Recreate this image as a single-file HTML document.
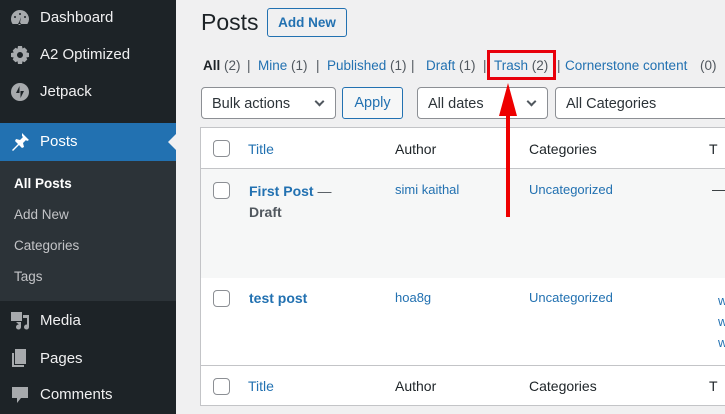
<!DOCTYPE html>
<html><head><meta charset="utf-8"><style>
*{margin:0;padding:0;box-sizing:border-box}
body{width:725px;height:414px;overflow:hidden;background:#f0f0f1;font-family:"Liberation Sans",sans-serif;font-size:14px;color:#1d2327;position:relative}
.a{position:absolute;white-space:nowrap}
#sb{position:absolute;left:0;top:0;width:176px;height:414px;background:#1d2327}
.mi{position:absolute;left:40px;color:#f0f0f1;font-size:15px}
.ic{position:absolute;left:10px;width:20px;height:20px;fill:#a7aaad}
.sub{position:absolute;left:14px;color:#c3c4c7;font-size:13.5px}
.link{color:#2271b1}
.cb{position:absolute;left:213px;width:17px;height:17px;border:1px solid #8c8f94;border-radius:4px;background:#fff}
.sel{position:absolute;height:32px;border:1px solid #8c8f94;border-radius:4px;background:#fff;font-size:14.5px;padding:8px 10px 0;color:#2c3338}
.chev{position:absolute;right:12px;top:10px;width:7px;height:7px;border-right:2px solid #50575e;border-bottom:2px solid #50575e;transform:rotate(45deg)}
.f{position:absolute;top:58px;font-size:13.5px;color:#50575e;white-space:nowrap}
</style></head><body>
<div id="sb">
<svg class="ic" style="top:8px" viewBox="0 0 20 20"><path d="M10 2a9 9 0 0 0-9 9c0 2 .6 3.6 1.6 5h14.8A9 9 0 0 0 10 2zm0 3a1 1 0 1 1 0 2 1 1 0 0 1 0-2zM5 8a1 1 0 1 1 0 2 1 1 0 0 1 0-2zm10 0a1 1 0 1 1 0 2 1 1 0 0 1 0-2zm-4 1-1 5.5a1.3 1.3 0 1 1-1 0z"/></svg>
<div class="mi" style="top:9px">Dashboard</div>
<svg class="ic" style="top:45px" viewBox="0 0 20 20"><path d="M8 1h4l.5 2.5 2-1 2.8 2.8-1 2 2.7.7v4l-2.7.5 1 2-2.8 2.8-2-1L12 19H8l-.5-2.7-2 1-2.8-2.8 1-2L1 12V8l2.7-.5-1-2 2.8-2.8 2 1zM10 7a3 3 0 1 0 0 6 3 3 0 0 0 0-6z"/></svg>
<div class="mi" style="top:46px">A2 Optimized</div>
<svg class="ic" style="top:82px" viewBox="0 0 20 20"><circle cx="10" cy="10" r="9"/><path d="M9.5 4v7H6zM10.5 16V9H14z" fill="#1d2327"/></svg>
<div class="mi" style="top:83px">Jetpack</div>
<div style="position:absolute;top:123px;left:0;width:176px;height:38px;background:#2271b1"></div>
<div style="position:absolute;top:134px;left:168px;border:8px solid transparent;border-right-color:#f0f0f1;border-left:0"></div>
<svg class="ic" style="top:132px;fill:#fff" viewBox="0 0 20 20"><path d="M12 1l7 7-2 1-1-1-3 3 1 4-2 1-3-3-6 6-1-1 6-6-3-3 1-2 4 1 3-3-1-1z"/></svg>
<div class="mi" style="top:133px;color:#fff">Posts</div>
<div style="position:absolute;top:161px;left:0;width:176px;height:140px;background:#2c3338"></div>
<div class="sub" style="top:176px;color:#fff;font-weight:bold">All Posts</div>
<div class="sub" style="top:207px">Add New</div>
<div class="sub" style="top:238px">Categories</div>
<div class="sub" style="top:269px">Tags</div>
<svg class="ic" style="top:310px" viewBox="0 0 20 20"><path d="M1 2h11v9H1zM13 5h6v12a2.5 2.5 0 1 1-2-2.4V8h-4zM6 12h5v5a2.5 2.5 0 1 1-2-2.4z"/></svg>
<div class="mi" style="top:312px">Media</div>
<svg class="ic" style="top:348px" viewBox="0 0 20 20"><path d="M5 1h11v15H5zM2 5h2v12h10v2H2z"/></svg>
<div class="mi" style="top:350px">Pages</div>
<svg class="ic" style="top:385px" viewBox="0 0 20 20"><path d="M2 2h16v11h-7l-4 5v-5H2z"/></svg>
<div class="mi" style="top:386px">Comments</div>
</div>

<div class="a" style="left:201px;top:9px;font-size:23px">Posts</div>
<div class="a" style="left:267px;top:8px;width:80px;height:29px;border:1px solid #2271b1;border-radius:3px;color:#2271b1;font-size:13.5px;font-weight:bold;text-align:center;line-height:27px">Add New</div>

<div class="f" style="left:203px"><b style="color:#1d2327">All</b> (2)</div>
<div class="f" style="left:247px">|</div>
<div class="f" style="left:258px"><span class="link">Mine</span> (1)</div>
<div class="f" style="left:316px">|</div>
<div class="f" style="left:327px"><span class="link">Published</span> (1)</div>
<div class="f" style="left:411px">|</div>
<div class="f" style="left:426px"><span class="link">Draft</span> (1)</div>
<div class="f" style="left:483px">|</div>
<div class="f" style="left:494px"><span class="link">Trash</span> (2)</div>
<div class="f" style="left:557px">|</div>
<div class="f" style="left:565px"><span class="link">Cornerstone content</span></div>
<div class="f" style="left:700px">(0)</div>
<div class="a" style="left:487px;top:50px;width:69px;height:30px;border:3px solid #e8000b"></div>

<div class="sel" style="left:201px;top:87px;width:135px">Bulk actions<span class="chev"></span></div>
<div class="a" style="left:342px;top:87px;width:61px;height:32px;border:1px solid #2271b1;border-radius:3px;background:#f6f7f7;color:#2271b1;font-size:14.5px;text-align:center;line-height:30px">Apply</div>
<div class="sel" style="left:417px;top:87px;width:131px">All dates<span class="chev"></span></div>
<div class="sel" style="left:555px;top:87px;width:200px">All Categories</div>

<div class="a" style="left:200px;top:127px;width:540px;height:279px;border:1px solid #c3c4c7;background:#fff"></div>
<div class="a" style="left:201px;top:168px;width:540px;height:110px;background:#f6f7f7;border-top:1px solid #c3c4c7"></div>
<div class="a" style="left:201px;top:365px;width:540px;height:1px;background:#c3c4c7"></div>

<div class="cb" style="top:140px"></div>
<div class="a link" style="left:248px;top:141px">Title</div>
<div class="a" style="left:395px;top:141px">Author</div>
<div class="a" style="left:529px;top:141px">Categories</div>
<div class="a" style="left:709px;top:141px">T</div>

<div class="cb" style="top:182px"></div>
<div class="a" style="left:249px;top:181px;line-height:21px;font-weight:bold;color:#2271b1">First Post <span style="font-weight:normal;color:#50575e">—</span><br><span style="color:#50575e">Draft</span></div>
<div class="a link" style="left:395px;top:182px;font-size:13px">simi kaithal</div>
<div class="a link" style="left:529px;top:182px;font-size:13px">Uncategorized</div>
<div class="a" style="left:712px;top:182px;font-size:13px">—</div>

<div class="cb" style="top:290px"></div>
<div class="a link" style="left:249px;top:290px;font-weight:bold">test post</div>
<div class="a link" style="left:395px;top:290px;font-size:13px">hoa8g</div>
<div class="a link" style="left:529px;top:290px;font-size:13px">Uncategorized</div>
<div class="a" style="left:718px;top:290px;font-size:13px;line-height:21px;color:#2271b1">w<br>w<br>w</div>

<div class="cb" style="top:378px"></div>
<div class="a link" style="left:248px;top:378px">Title</div>
<div class="a" style="left:395px;top:378px">Author</div>
<div class="a" style="left:529px;top:378px">Categories</div>
<div class="a" style="left:709px;top:378px">T</div>

<svg class="a" style="left:490px;top:80px" width="40" height="140" viewBox="0 0 40 140"><path d="M18 137V25" stroke="#ee0000" stroke-width="4"/><path d="M18 3 9 36h18z" fill="#ee0000"/></svg>
</body></html>
